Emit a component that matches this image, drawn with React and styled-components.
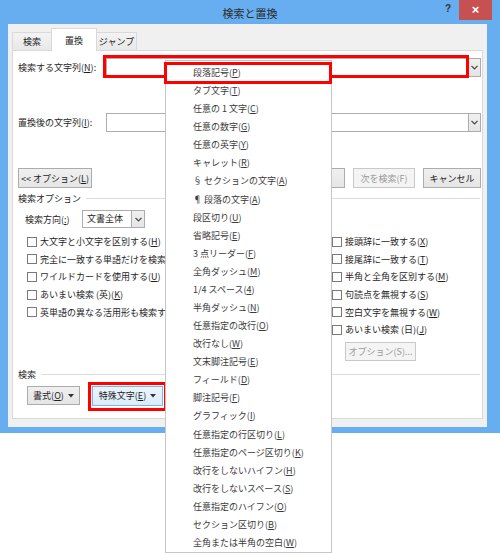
import React from "react";
import styled, { createGlobalStyle, css } from "styled-components";

const GlobalStyle = createGlobalStyle`
  html, body {
    margin: 0;
    padding: 0;
    background: #fff;
  }
  body {
    width: 500px;
    height: 553px;
    overflow: hidden;
    font-family: "Noto Sans CJK JP", "Noto Sans", sans-serif;
    font-size: 9px;
    color: #1e1e1e;
  }
  u {
    text-underline-offset: 1px;
  }
`;

const menuItems = [
  ["段落記号", "P"],
  ["タブ文字", "T"],
  ["任意の 1 文字", "C"],
  ["任意の数字", "G"],
  ["任意の英字", "Y"],
  ["キャレット", "R"],
  ["§ セクションの文字", "A"],
  ["¶ 段落の文字", "A"],
  ["段区切り", "U"],
  ["省略記号", "E"],
  ["3 点リーダー", "F"],
  ["全角ダッシュ", "M"],
  ["1/4 スペース", "4"],
  ["半角ダッシュ", "N"],
  ["任意指定の改行", "O"],
  ["改行なし", "W"],
  ["文末脚注記号", "E"],
  ["フィールド", "D"],
  ["脚注記号", "F"],
  ["グラフィック", "I"],
  ["任意指定の行区切り", "L"],
  ["任意指定のページ区切り", "K"],
  ["改行をしないハイフン", "H"],
  ["改行をしないスペース", "S"],
  ["任意指定のハイフン", "O"],
  ["セクション区切り", "B"],
  ["全角または半角の空白", "W"],
];

const leftChecks = [
  ["大文字と小文字を区別する", "H"],
  ["完全に一致する単語だけを検索する", "Y"],
  ["ワイルドカードを使用する", "U"],
  ["あいまい検索 (英)", "K"],
  ["英単語の異なる活用形も検索する", "W"],
];

const rightChecks = [
  ["接頭辞に一致する", "X"],
  ["接尾辞に一致する", "T"],
  ["半角と全角を区別する", "M"],
  ["句読点を無視する", "S"],
  ["空白文字を無視する", "W"],
  ["あいまい検索 (日)", "J"],
];

// mnemonic label: text(K) with the key underlined
const Mn = ({ t, k, after = "" }) => (
  <span>
    {t}(<u>{k}</u>){after}
  </span>
);

const Chevron = () => (
  <svg width="7" height="5" viewBox="0 0 7 5">
    <path d="M0.5 0.8 L3.5 3.8 L6.5 0.8" fill="none" stroke="#404040" strokeWidth="1.2" />
  </svg>
);

const Caret = () => (
  <svg width="6" height="4" viewBox="0 0 6 4">
    <path d="M0 0 H6 L3 3.5 Z" fill="#333" />
  </svg>
);

const Page = styled.div`
  position: relative;
  width: 500px;
  height: 553px;
`;

const Window = styled.div`
  width: 500px;
  height: 433px;
  background: #66aef0;
  display: flex;
  flex-direction: column;
`;

const TitleBar = styled.div`
  height: 24px;
  display: grid;
  grid-template-columns: 1fr auto 1fr;
`;

const Title = styled.div`
  padding-top: 5px;
  font-size: 11px;
  line-height: 16px;
  color: #2b2b2b;
`;

const Controls = styled.div`
  justify-self: end;
  display: flex;
  align-items: flex-start;
  margin-right: 8px;
`;

const Help = styled.span`
  font-family: "Liberation Sans", sans-serif;
  font-weight: bold;
  font-size: 10px;
  line-height: 18px;
  color: #333;
  margin-right: 8px;
`;

const CloseButton = styled.div`
  width: 33px;
  height: 20px;
  background: #c75050;
  color: #fff;
  font-family: "Liberation Sans", sans-serif;
  font-size: 13px;
  font-weight: bold;
  line-height: 19px;
  text-align: center;
`;

const Client = styled.div`
  flex: 1;
  margin: 0 13px 6px 8px;
  background: #f0f0f0;
  padding: 4px 4px 8px 4px;
  display: flex;
  flex-direction: column;
`;

const TabStrip = styled.div`
  display: flex;
  align-items: flex-end;
  height: 22px;
  position: relative;
  z-index: 1;
`;

const Tab = styled.div`
  width: ${(p) => p.$w}px;
  height: ${(p) => (p.$active ? 23 : 18)}px;
  margin-bottom: ${(p) => (p.$active ? -1 : 0)}px;
  box-sizing: border-box;
  border: 1px solid #d9d9d9;
  border-bottom: none;
  margin-left: -1px;
  background: ${(p) => (p.$active ? "#fff" : "linear-gradient(#f3f3f3, #e8e8e8)")};
  display: flex;
  align-items: center;
  justify-content: center;
  color: #222;
  &:first-child {
    margin-left: 0;
  }
`;

const Panel = styled.div`
  flex: 1;
  background: #fff;
  border: 1px solid #d9d9d9;
  padding: 7px 1px 0 5px;
  display: flex;
  flex-direction: column;
`;

const FieldRow = styled.div`
  display: flex;
  align-items: center;
  height: 19px;
  margin-top: ${(p) => p.$top || 0}px;
`;

const FieldLabel = styled.div`
  width: 88px;
  white-space: nowrap;
`;

const Combo = styled.div`
  flex: 1;
  display: flex;
  height: 19px;
`;

const ComboInput = styled.div`
  flex: 1;
  position: relative;
  box-sizing: border-box;
  border: 1px solid #abadb3;
  background: #fff;
  ${(p) =>
    p.$marked &&
    css`
      &::after {
        content: "";
        position: absolute;
        left: -4px;
        top: -4px;
        right: -1px;
        bottom: -2px;
        border: 3px solid #ff0000;
      }
    `}
`;

const ComboArrow = styled.div`
  width: 12px;
  box-sizing: border-box;
  border: 1px solid #acacac;
  border-left: none;
  background: linear-gradient(#f0f0f0, #e5e5e5);
  display: flex;
  align-items: center;
  justify-content: center;
`;

const ButtonRow = styled.div`
  display: flex;
  align-items: center;
  gap: ${(p) => p.$gap || 8}px;
  margin-top: ${(p) => p.$top || 0}px;
  padding-left: ${(p) => p.$indent || 0}px;
`;

const Spacer = styled.div`
  flex: 1;
`;

const Button = styled.div`
  position: relative;
  width: ${(p) => p.$w}px;
  height: ${(p) => p.$h || 20}px;
  box-sizing: border-box;
  border: 1px solid #acacac;
  background: linear-gradient(#f0f0f0, #e5e5e5);
  display: flex;
  align-items: center;
  justify-content: center;
  gap: 4px;
  padding-right: ${(p) => p.$padRight || 0}px;
  white-space: nowrap;
  color: #1e1e1e;
  ${(p) =>
    p.$disabled &&
    css`
      border-color: #c9c9c9;
      background: #f4f4f4;
      color: #9a9a9a;
    `}
  ${(p) =>
    p.$hot &&
    css`
      border-color: #7eb4ea;
      background: linear-gradient(#ecf4fc, #dcecfc);
    `}
  ${(p) =>
    p.$marked &&
    css`
      &::after {
        content: "";
        position: absolute;
        left: -5px;
        top: -5px;
        right: -5px;
        bottom: -6px;
        border: 3px solid #ff0000;
      }
    `}
`;

const GroupHeader = styled.div`
  display: flex;
  align-items: center;
  height: 12px;
  margin-top: ${(p) => p.$top || 0}px;
  margin-right: 1px;
  &::after {
    content: "";
    flex: 1;
    height: 1px;
    background: #dcdcdc;
    margin-left: 5px;
  }
`;

const DirectionRow = styled.div`
  display: flex;
  align-items: center;
  margin-top: 6px;
  padding-left: 7px;
  height: 18px;
`;

const DirectionLabel = styled.div`
  width: 57px;
`;

const Select = styled.div`
  width: 63px;
  height: 18px;
  box-sizing: border-box;
  border: 1px solid #acacac;
  display: flex;
  background: #fff;
`;

const SelectValue = styled.div`
  flex: 1;
  padding-left: 4px;
  line-height: 16px;
`;

const SelectArrow = styled.div`
  width: 12px;
  border-left: 1px solid #acacac;
  background: linear-gradient(#f0f0f0, #e5e5e5);
  display: flex;
  align-items: center;
  justify-content: center;
`;

const Options = styled.div`
  display: grid;
  grid-template-columns: 305px 1fr;
  padding-left: 9px;
  margin-top: 5px;
`;

const CheckColumn = styled.div`
  display: flex;
  flex-direction: column;
  min-width: 0;
`;

const CheckRow = styled.div`
  display: flex;
  align-items: center;
  height: 17.6px;
  white-space: nowrap;
`;

const Box = styled.span`
  width: 10px;
  height: 10px;
  box-sizing: border-box;
  border: 1px solid #7a7a7a;
  background: #fff;
  margin-right: 3px;
  flex: none;
`;

const OptionsButtonWrap = styled.div`
  margin: 3px 0 0 13px;
`;

const Menu = styled.div`
  position: absolute;
  left: 165px;
  top: 60px;
  width: 167px;
  height: 493px;
  box-sizing: border-box;
  background: #fff;
  border: 1px solid #c6c6c6;
  padding-top: 3px;
`;

const MenuItem = styled.div`
  position: relative;
  height: 18.08px;
  line-height: 18.08px;
  padding-left: 27px;
  color: #3a3a3a;
  white-space: nowrap;
  ${(p) =>
    p.$marked &&
    css`
      &::after {
        content: "";
        position: absolute;
        left: -2px;
        top: -2px;
        right: -1px;
        bottom: -2px;
        border: 3px solid #ff0000;
      }
    `}
`;

const Check = ({ t, k }) => (
  <CheckRow>
    <Box />
    <Mn t={t} k={k} />
  </CheckRow>
);

export default function App() {
  return (
    <Page>
      <GlobalStyle />
      <Window>
        <TitleBar>
          <div />
          <Title>検索と置換</Title>
          <Controls>
            <Help>?</Help>
            <CloseButton>×</CloseButton>
          </Controls>
        </TitleBar>
        <Client>
          <TabStrip>
            <Tab $w={40}>検索</Tab>
            <Tab $w={46} $active>
              置換
            </Tab>
            <Tab $w={41}>ジャンプ</Tab>
          </TabStrip>
          <Panel>
            <FieldRow>
              <FieldLabel>
                <Mn t="検索する文字列" k="N" after=":" />
              </FieldLabel>
              <Combo>
                <ComboInput $marked />
                <ComboArrow>
                  <Chevron />
                </ComboArrow>
              </Combo>
            </FieldRow>
            <FieldRow $top={36}>
              <FieldLabel>
                <Mn t="置換後の文字列" k="I" after=":" />
              </FieldLabel>
              <Combo>
                <ComboInput />
                <ComboArrow>
                  <Chevron />
                </ComboArrow>
              </Combo>
            </FieldRow>
            <ButtonRow $top={36}>
              <Button $w={74}>
                <span>
                  &lt;&lt; オプション(<u>L</u>)
                </span>
              </Button>
              <Spacer />
              <Button $w={62}>
                <Mn t="置換" k="R" />
              </Button>
              <Button $w={62} $padRight={20}>
                <Mn t="すべて置換" k="A" />
              </Button>
              <Button $w={62} $disabled>
                次を検索(F)
              </Button>
              <Button $w={58}>キャンセル</Button>
            </ButtonRow>
            <GroupHeader $top={4}>検索オプション</GroupHeader>
            <DirectionRow>
              <DirectionLabel>
                <Mn t="検索方向" k=":" />
              </DirectionLabel>
              <Select>
                <SelectValue>文書全体</SelectValue>
                <SelectArrow>
                  <Chevron />
                </SelectArrow>
              </Select>
            </DirectionRow>
            <Options>
              <CheckColumn>
                {leftChecks.map(([t, k]) => (
                  <Check key={t} t={t} k={k} />
                ))}
              </CheckColumn>
              <CheckColumn>
                {rightChecks.map(([t, k]) => (
                  <Check key={t} t={t} k={k} />
                ))}
                <OptionsButtonWrap>
                  <Button $w={71} $h={19} $disabled>
                    オプション(S)...
                  </Button>
                </OptionsButtonWrap>
              </CheckColumn>
            </Options>
            <GroupHeader $top={8}>検索</GroupHeader>
            <ButtonRow $top={5} $gap={12} $indent={9}>
              <Button $w={53} $h={19}>
                <Mn t="書式" k="O" />
                <Caret />
              </Button>
              <Button $w={71} $hot $marked>
                <Mn t="特殊文字" k="E" />
                <Caret />
              </Button>
            </ButtonRow>
          </Panel>
        </Client>
      </Window>
      <Menu>
        {menuItems.map(([t, k], i) => (
          <MenuItem key={i} $marked={i === 0}>
            <Mn t={t} k={k} />
          </MenuItem>
        ))}
      </Menu>
    </Page>
  );
}
